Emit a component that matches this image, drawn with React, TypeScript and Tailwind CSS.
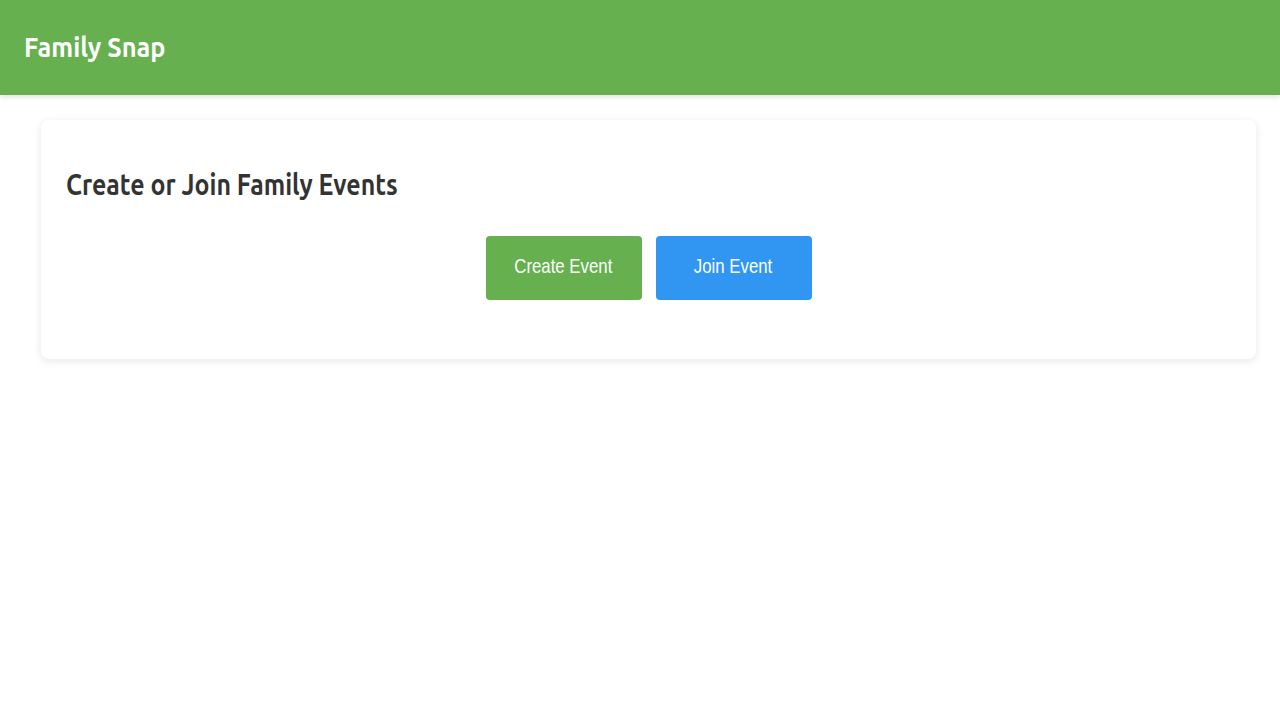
export default function App() {
  return (
    <div className="min-h-[720px] bg-white">
      <header className="flex h-[95px] items-center bg-[#66b050] px-6 shadow-[0_2px_5px_rgba(0,0,0,0.12)]">
        <h1 className="font-['Ubuntu','Noto_Sans',sans-serif] text-[27px] font-bold text-white">
          <span className="inline-block origin-left scale-x-[0.94]">Family Snap</span>
        </h1>
      </header>

      <main className="ml-[41px] mr-[24px] pt-[25px]">
        <section className="rounded-lg bg-white px-[25px] pb-[59px] pt-[46px] shadow-[0_2px_8px_rgba(0,0,0,0.1)]">
          <h2 className="font-['Ubuntu','Noto_Sans',sans-serif] text-[30px] font-bold leading-[36px] text-[#333]">
            <span className="inline-block origin-left scale-x-[0.83]">Create or Join Family Events</span>
          </h2>
          <div className="mt-[34px] flex justify-center gap-[14px]">
            <button className="h-[64px] w-[156px] rounded bg-[#66b050] pb-1 font-['Liberation_Sans',Arial,sans-serif] text-[21px] text-white">
              <span className="inline-block scale-x-[0.8]">Create Event</span>
            </button>
            <button className="h-[64px] w-[156px] rounded bg-[#3096f2] pb-1 font-['Liberation_Sans',Arial,sans-serif] text-[21px] text-white">
              <span className="inline-block scale-x-[0.8]">Join Event</span>
            </button>
          </div>
        </section>
      </main>
    </div>
  );
}
